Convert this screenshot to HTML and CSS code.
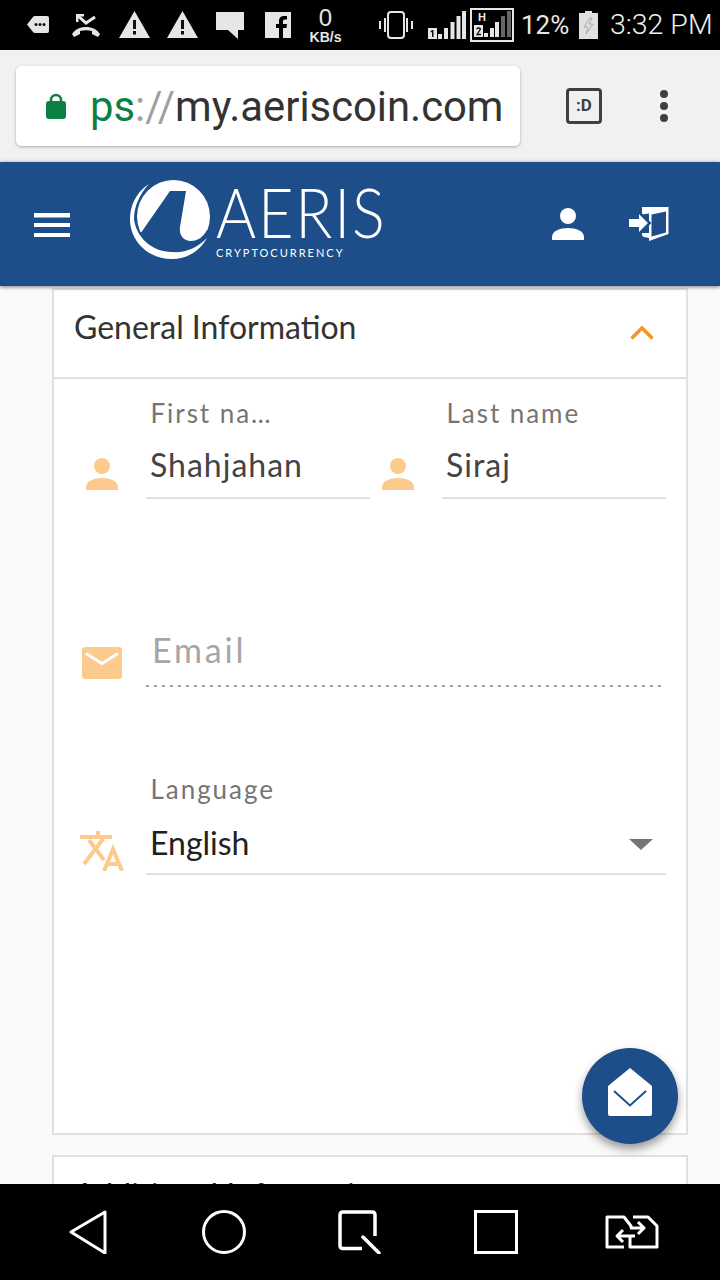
FILE: index.html
```html
<!DOCTYPE html>
<html lang="en">
<head>
<meta charset="utf-8">
<title>Aeris - General Information</title>
<link rel="stylesheet" href="styles.css">
</head>
<body>
<div class="screen">
  <header class="status">
    <svg class="st st-tag" width="22" height="17" viewBox="0 0 22 17"><path d="M0 8.5 6 1q.6-1 2-1h12q2 0 2 2v13q0 2-2 2H8q-1.400 0-2-1z" fill="#e6e6e6"/><g fill="#111"><circle cx="9" cy="8.500" r="1.500"/><circle cx="13" cy="8.500" r="1.500"/><circle cx="17" cy="8.500" r="1.500"/></g></svg>
    <svg class="st st-call" width="28" height="23" viewBox="0 0 28 23"><path d="M5 1l9 8L23 3" fill="none" stroke="#e6e6e6" stroke-width="3"/><path d="M4 0h8v2.500H6.500V8H4z" fill="#e6e6e6"/><path d="M0 20c3-4.500 8-7 14-7s11 2.500 14 7l-2 3-6-3v-3c-4-1-8-1-12 0v3l-6 3z" fill="#e6e6e6"/></svg>
    <svg class="st st-warn1" width="31" height="27" viewBox="0 0 31 27"><path d="M15.500 0 31 27H0z" fill="#e6e6e6"/><path d="M14 9h3v9h-3zM14 20h3v3.500h-3z" fill="#111"/></svg>
    <svg class="st st-warn2" width="31" height="27" viewBox="0 0 31 27"><path d="M15.500 0 31 27H0z" fill="#e6e6e6"/><path d="M14 9h3v9h-3zM14 20h3v3.500h-3z" fill="#111"/></svg>
    <svg class="st st-msg" width="28" height="28" viewBox="0 0 28 28"><path d="M0 0h28v18h-6v9L12 18H0z" fill="#e6e6e6"/></svg>
    <svg class="st st-fb" width="26" height="26" viewBox="0 0 26 26"><path d="M0 0h26v26H18V16h3.500l.5-4h-4V9.500c0-1.200.5-2 2-2h2V4h-3c-3.500 0-5 2.200-5 5v3h-3v4h3v10H0z" fill="#e6e6e6"/></svg>
    <div class="speed"><span class="speed-num">0</span><span class="speed-unit">KB/s</span></div>
    <svg class="st st-vib" width="34" height="28" viewBox="0 0 34 28"><rect x="9" y="1" width="16" height="26" rx="3" fill="none" stroke="#e6e6e6" stroke-width="2"/><path d="M5 7h2v14H5zM0 10h2v8H0zM27 7h2v14h-2zM32 10h2v8h-2z" fill="#e6e6e6"/></svg>
    <svg class="st st-sig1" width="38" height="28" viewBox="0 0 38 28"><path d="M0 17h9v11H0z" fill="#e6e6e6"/><path d="M2.500 20l2-1h1v7h-1.500v-5l-1 .5z" fill="#111"/><path d="M10 23h4v5h-4zM16 17h4v11h-4zM22.500 11h4v17h-4zM28.500 5h4v23h-4zM34 0h4v28h-4z" fill="#e6e6e6"/></svg>
    <div class="sig2">
      <span class="sig2-h">H</span>
      <svg width="44" height="34" viewBox="0 0 44 34"><path d="M1 1h42v32H1z" fill="none" stroke="#e6e6e6" stroke-width="2"/><path d="M4 17h9v12H4z" fill="#e6e6e6"/><path d="M6.500 21q2-2 4 0l-3.500 5.500h4" fill="none" stroke="#111" stroke-width="1.300"/><path d="M14 25h4v4h-4zM20 20h4v9h-4zM25 14h4v15h-4z" fill="#e6e6e6"/><path d="M31 8h4v21h-4zM37 3h4v26h-4z" fill="#666"/></svg>
    </div>
    <span class="pct">12%</span>
    <svg class="st st-bat" width="19" height="28" viewBox="0 0 19 28"><path d="M6 0h7v2h6v26H0V2h6z" fill="#e0e0e0"/><path d="M11 7 5 16h4l-2 7 7-10h-4l3-6z" fill="none" stroke="#aaa" stroke-width="1"/></svg>
    <span class="clock">3:32 PM</span>
  </header>

  <div class="browser">
    <div class="url">
      <svg class="lock" width="20" height="26" viewBox="0 0 20 26"><path d="M5 11V7a5 5 0 0 1 10 0v4" fill="none" stroke="#0b8043" stroke-width="2.500"/><rect y="8" width="20" height="18" rx="3" fill="#0b8043"/></svg>
      <span class="url-text"><span class="u-green">ps</span><span class="u-gray">://</span>my.aeriscoin.com</span>
    </div>
    <div class="savings"><span>:D</span></div>
    <svg class="kebab" width="8" height="32" viewBox="0 0 8 32"><g fill="#3c4043"><circle cx="4" cy="4" r="4"/><circle cx="4" cy="16" r="4"/><circle cx="4" cy="28" r="4"/></g></svg>
  </div>

  <nav class="appbar">
    <svg class="burger" width="36" height="24" viewBox="0 0 36 24"><path d="M0 0h36v4.500H0zM0 10h36v4H0zM0 20h36v4H0z" fill="#fff"/></svg>
    <div class="logo">
      <svg class="logo-mark" width="82" height="82" viewBox="129 179 82 82">
        <circle cx="173.500" cy="216.500" r="36.500" fill="#fff"/>
        <path d="M170 191h16l-6 36c-1 8 3 14 11 14 7 0 12-4 16-11l8 10-35 22-50-22 11.700-8.300z" fill="#1d4e89"/>
        <path d="M149 184c-13 8-19 22-19 35 0 23 19 40 42 40 15 0 28-8 35-21-10 10-21 15-35 14-20 0-36-15-38-33 0-13 6-25 15-35z" fill="#fff"/>
      </svg>
      <div class="logo-text">
        <span class="logo-name">AERIS</span>
        <span class="logo-sub">CRYPTOCURRENCY</span>
      </div>
    </div>
    <svg class="app-user" width="32" height="32" viewBox="0 0 32 32"><circle cx="16" cy="8" r="8" fill="#fff"/><path d="M0 32v-3c0-6 8-9 16-9s16 3 16 9v3z" fill="#fff"/></svg>
    <svg class="app-door" width="40" height="36" viewBox="0 0 40 36"><path d="M13 1h26.500v27L20 35V7.500l-7 1z" fill="#fff"/><path d="M22.500 8.500 37 5.500v21l-14.500 4z" fill="#1d4e89"/><path d="M0 13h10V8l9 9-9 9v-5H0z" fill="#fff"/><path d="M11 7l10 10-10 10" fill="none" stroke="#1d4e89" stroke-width="2"/><path d="M13 27h7v5l-5-1q-2-.500-2-2z" fill="#fff"/></svg>
  </nav>

  <main class="content">
    <section class="card card-main">
      <div class="card-head">
        <h2 class="card-title">General Information</h2>
        <svg class="chev" width="24" height="15" viewBox="0 0 24 15"><path d="M1.500 13.500 12 3l10.500 10.500" fill="none" stroke="#f7931e" stroke-width="3.500"/></svg>
      </div>
      <div class="form">
        <div class="row-names">
          <svg class="ic-user" width="32" height="32" viewBox="0 0 32 32"><circle cx="16" cy="8" r="8" fill="#fdca8d"/><path d="M0 32v-3c0-6 8-9 16-9s16 3 16 9v3z" fill="#fdca8d"/></svg>
          <div class="field field-first">
            <label class="label">First na…</label>
            <div class="value">Shahjahan</div>
          </div>
          <svg class="ic-user ic-user2" width="32" height="32" viewBox="0 0 32 32"><circle cx="16" cy="8" r="8" fill="#fdca8d"/><path d="M0 32v-3c0-6 8-9 16-9s16 3 16 9v3z" fill="#fdca8d"/></svg>
          <div class="field field-last">
            <label class="label">Last name</label>
            <div class="value">Siraj</div>
          </div>
        </div>
        <div class="row-email">
          <svg class="ic-mail" width="40" height="32" viewBox="0 0 40 32"><rect width="40" height="32" rx="3" fill="#fdca8d"/><path d="M4 6.500l16 10 16-10" fill="none" stroke="#fff" stroke-width="3"/></svg>
          <div class="email-field"><span class="placeholder">Email</span></div>
        </div>
        <div class="row-lang">
          <svg class="ic-lang" width="44" height="40" viewBox="0 0 44 40"><g fill="none" stroke="#fdca8d" stroke-width="4"><path d="M0 6h32M18 0v6"/><path d="M23 8 4 33"/><path d="M9 9l15 20"/><path d="M24 40l9-22 9 22M27 33h12"/></g></svg>
          <div class="field field-lang">
            <label class="label">Language</label>
            <div class="select"><span class="value-dark">English</span><span class="caret"></span></div>
          </div>
        </div>
      </div>
    </section>
    <section class="card card-next">
      <h2 class="card-title card-title-next">Additional Information</h2>
    </section>
    <button class="fab" type="button" aria-label="Messages">
      <svg width="44" height="48" viewBox="0 0 44 48"><path d="M22 0 44 18v28q0 2-2 2H2q-2 0-2-2V18z" fill="#fff"/><path d="M6 23l16 14.500L38 23" fill="none" stroke="#1d4e89" stroke-width="2"/></svg>
    </button>
  </main>

  <footer class="navbar">
    <svg width="38" height="44" viewBox="0 0 38 44"><path d="M2 22 36 2v41z" fill="none" stroke="#fff" stroke-width="3" stroke-linejoin="round"/></svg>
    <svg width="44" height="44" viewBox="0 0 44 44"><circle cx="22" cy="22" r="20.500" fill="none" stroke="#fff" stroke-width="3"/></svg>
    <svg width="44" height="44" viewBox="0 0 44 44"><path d="M24 38.500H5q-3 0-3-3V5q0-3 3-3h29q3 0 3 3v21" fill="none" stroke="#fff" stroke-width="3.500"/><path d="M25 27l16 16" stroke="#fff" stroke-width="3.500" stroke-linecap="round"/></svg>
    <svg width="44" height="44" viewBox="0 0 44 44"><rect x="1.500" y="1.500" width="41" height="41" fill="none" stroke="#fff" stroke-width="3"/></svg>
    <svg width="54" height="34" viewBox="0 0 54 34"><g fill="none" stroke="#fff" stroke-width="3" stroke-linejoin="round"><path d="M19 32H2V2h17l7 9v2"/><path d="M28 2h15l9 9v21H25V22"/><path d="M25 13h13M33 7l6 6-6 6"/><path d="M30 21H12M18 15l-6 6 6 6"/></g></svg>
  </footer>
</div>
</body>
</html>
```

FILE: styles.css
```css
* { box-sizing: border-box; }
html, body { margin: 0; padding: 0; }
body { width: 720px; height: 1280px; overflow: hidden; background: #fafafa; font-family: "Lato", "Liberation Sans", sans-serif; }
.screen { width: 720px; height: 1280px; display: flex; flex-direction: column; overflow: hidden; }

/* status bar */
.status { height: 50px; flex: none; background: #000; display: flex; align-items: center; padding-left: 27px; color: #e6e6e6; }
.st { flex: none; display: block; }
.st-tag { margin-top: -1px; }
.st-call { margin-left: 23px; }
.st-warn1 { margin-left: 19px; margin-top: -1px; }
.st-warn2 { margin-left: 17px; margin-top: -1px; }
.st-msg { margin-left: 18px; margin-top: 1px; }
.st-fb { margin-left: 21px; }
.speed { margin-left: 17px; margin-top: 1px; width: 35px; display: flex; flex-direction: column; align-items: center; font-family: "Liberation Sans", sans-serif; }
.speed-num { font-size: 24px; line-height: 24px; margin-top: -1px; }
.speed-unit { font-size: 14px; line-height: 13px; margin-top: 1px; font-weight: 700; }
.st-vib { margin-left: 36px; }
.st-sig1 { margin-left: 15px; }
.sig2 { margin-left: 4px; width: 44px; height: 34px; position: relative; flex: none; }
.sig2 svg { display: block; }
.sig2-h { position: absolute; left: 8px; top: 4px; font: 700 11px/11px "Liberation Sans", sans-serif; color: #e6e6e6; }
.pct { margin-left: 7px; font: 400 26px/30px "Roboto", sans-serif; width: 49px; flex: none; white-space: nowrap; }
.st-bat { margin-left: 9px; }
.clock { margin-left: 12px; font: 300 28.500px/30px "Roboto", sans-serif; white-space: nowrap; color: #f0f0f0; }

/* browser bar */
.browser { height: 112px; flex: none; background: #f1f1f1; display: flex; align-items: center; padding: 0 0 0 16px; }
.url { width: 504px; height: 80px; margin-top: -1px; background: #fff; border-radius: 5px; box-shadow: 0 1px 3px rgba(0,0,0,.3); display: flex; align-items: center; padding-left: 30px; overflow: hidden; }
.lock { flex: none; }
.url-text { margin-left: 24px; margin-top: 2px; font: 400 41.800px/48px "Roboto", sans-serif; color: #333; white-space: nowrap; }
.u-green { color: #0b8043; }
.u-gray { color: #a0a0a0; }
.savings { width: 36px; height: 36px; margin-left: 46px; margin-top: -1px; border: 3.500px solid #3c4043; border-radius: 4px; display: flex; align-items: center; justify-content: center; }
.savings span { font: 700 17px/17px "Roboto", sans-serif; color: #3c4043; }
.kebab { margin-left: 58px; margin-top: -1px; }

/* app bar */
.appbar { height: 124px; flex: none; background: #1d4e89; display: flex; align-items: center; padding-left: 34px; box-shadow: 0 1px 4px rgba(0,0,0,.5); position: relative; z-index: 2; }
.burger { flex: none; margin-top: 2px; }
.logo { display: flex; align-items: flex-start; margin-left: 59px; width: 253px; height: 82px; margin-top: -8px; flex: none; }
.logo-mark { flex: none; display: block; }
.logo-text { margin-left: 5px; display: flex; flex-direction: column; color: #fff; }
.logo-name { font: 300 68px/50px "Lato", sans-serif; letter-spacing: 2px; margin-top: 8px; height: 60px; white-space: nowrap; transform: scaleX(.9); transform-origin: left center; }
.logo-sub { font: 400 11px/11px "Lato", sans-serif; letter-spacing: 2px; white-space: nowrap; }
.app-user { margin-left: 170px; flex: none; }
.app-door { margin-left: 45px; flex: none; }

/* content */
.content { flex: 1; position: relative; overflow: hidden; padding: 2px 32px 0 52px; background: #fafafa; }
.card { background: #fff; border: 2px solid #e0e0e0; }
.card-main { height: 847px; }
.card-next { margin-top: 20px; height: 200px; padding: 19px 0 0 20px; }
.card-head { height: 89px; border-bottom: 2px solid #e0e0e0; display: flex; align-items: center; justify-content: space-between; padding: 0 32px 14px 20px; }
.card-title { margin: 0; font: 400 32px/38px "Lato", sans-serif; color: #333; white-space: nowrap; }
.card-title-next { color: #222; }
.chev { margin-top: 12px; }

.form { display: flex; flex-direction: column; }
.row-names { display: flex; align-items: flex-end; padding-left: 32px; }
.ic-user { flex: none; margin-bottom: 9px; }
.field { border-bottom: 2px solid #e0e0e0; padding-top: 19px; padding-bottom: 11px; }
.field-first { width: 224px; margin-left: 28px; }
.ic-user2 { margin-left: 12px; }
.field-last { width: 224px; margin-left: 28px; }
.label { display: block; height: 30px; margin-bottom: 18px; padding-left: 4.500px; font: 400 26px/30px "Lato", sans-serif; letter-spacing: 1.950px; color: #757575; white-space: nowrap; }
.value { height: 40px; padding-left: 4px; margin-top: -1px; margin-bottom: 1px; font: 400 32px/40px "Lato", sans-serif; letter-spacing: 1px; color: #444; }

.row-email { display: flex; align-items: flex-end; margin-top: 132px; padding-left: 28px; }
.ic-mail { flex: none; margin-bottom: 8px; }
.email-field { width: 516px; height: 56px; margin-left: 24px; padding: 0 0 16px 6px; background: repeating-linear-gradient(90deg, #a3a3a3 0 3px, transparent 3px 8px) left bottom / 100% 2px no-repeat; }
.placeholder { display: block; margin-top: -1px; font: 400 34px/40px "Lato", sans-serif; letter-spacing: 2.800px; color: #a6a6a6; }

.row-lang { display: flex; align-items: flex-end; margin-top: 88px; padding-left: 26px; }
.ic-lang { flex: none; margin-bottom: 4px; }
.field-lang { width: 520px; margin-left: 22px; padding-top: 0; padding-bottom: 10px; }
.field-lang .label { margin-top: -1px; margin-bottom: 19px; }
.select { height: 40px; display: flex; align-items: center; justify-content: space-between; padding: 0 13px 0 4px; }
.value-dark { font: 400 32px/40px "Lato", sans-serif; color: #212121; }
.caret { width: 0; height: 0; margin-top: 2px; border-left: 12px solid transparent; border-right: 12px solid transparent; border-top: 11px solid #757575; }

.fab { position: absolute; left: 582px; top: 762px; width: 96px; height: 96px; padding: 0; border: 0; border-radius: 50%; background: #1d4e89; box-shadow: 0 5px 10px rgba(0,0,0,.4); display: flex; align-items: center; justify-content: center; }
.fab svg { display: block; margin-top: -8px; }

/* nav bar */
.navbar { height: 96px; flex: none; background: #000; display: grid; grid-template-columns: repeat(5, 136px); padding: 0 20px; justify-items: center; align-items: center; position: relative; z-index: 3; }
```
